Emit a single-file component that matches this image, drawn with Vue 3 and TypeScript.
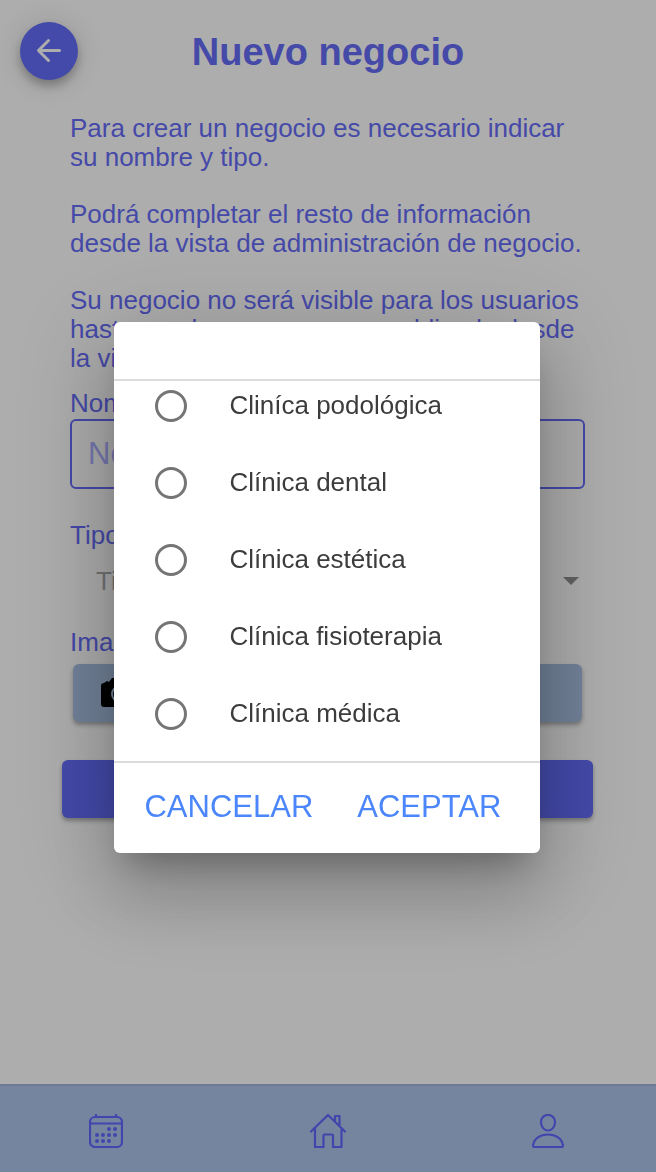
<script setup lang="ts">
import { ref } from 'vue'

const types: string[] = [
  'Cliníca podológica',
  'Clínica dental',
  'Clínica estética',
  'Clínica fisioterapia',
  'Clínica médica',
]
const selected = ref<string>('')
const name = ref<string>('')
const dots: number[][] = [
  [20, 15], [26, 15],
  [8, 21], [14, 21], [20, 21], [26, 21],
  [8, 27], [14, 27], [20, 27],
]
</script>

<template>
  <div class="screen">
    <header class="top">
      <button class="back" type="button" aria-label="Volver">
        <svg viewBox="0 0 26 26" width="26" height="26">
          <path d="M12.500 2.500L2.500 12.500l10 10M3 12.500H23.500" />
        </svg>
      </button>
      <h1>Nuevo negocio</h1>
    </header>

    <main class="content">
      <p>Para crear un negocio es necesario indicar su nombre y tipo.</p>
      <p>Podrá completar el resto de información desde la vista de administración de negocio.</p>
      <p>
        Su negocio no será visible para los usuarios
        hasta que lo marque como publicado desde
        la vista de administración.
      </p>
      <form class="form" @submit.prevent>
        <label for="name">Nombre</label>
        <input id="name" v-model="name" class="name" type="text" placeholder="Nombre" />
        <label for="kind">Tipo</label>
        <div class="pick">
          <select id="kind" v-model="selected">
            <option value="">Tipo</option>
            <option v-for="t in types" :key="t" :value="t">{{ t }}</option>
          </select>
          <svg viewBox="0 0 16 8" width="16" height="8"><path d="M0 0h16L8 8z" /></svg>
        </div>
        <span class="caption">Imagen</span>
        <button class="photo" type="button" aria-label="Imagen">
          <svg viewBox="0 0 36 30" width="36" height="30">
            <path d="M3 5l3-2 2 1 3-4h14l4 5h4a3 3 0 0 1 3 3v18a3 3 0 0 1-3 3H3a3 3 0 0 1-3-3V8a3 3 0 0 1 3-3z" />
            <circle cx="19" cy="16" r="8" />
          </svg>
        </button>
        <button class="submit" type="submit" aria-label="Crear"></button>
      </form>
    </main>

    <nav class="tabs">
      <a href="#agenda" aria-label="Agenda">
        <svg viewBox="0 0 34 34" width="34" height="34">
          <rect x="1" y="3" width="32" height="30" rx="5" />
          <path d="M1 9.500h32M7 1v2M27 1v2" />
          <circle v-for="d in dots" :key="d.join()" class="dot" :cx="d[0]" :cy="d[1]" r="2" />
        </svg>
      </a>
      <a href="#inicio" aria-label="Inicio">
        <svg viewBox="0 0 36 34" width="36" height="34">
          <path d="M1 17.500L18 1l17 16.500M5 14v19h8.500V21.500q0-1 1-1h7.500q1 0 1 1V33H31.500V14M25 7V2h4.500v10" />
        </svg>
      </a>
      <a href="#perfil" aria-label="Perfil">
        <svg viewBox="0 0 32 34" width="32" height="34">
          <path d="M16 1C11.500 1 8.800 4.300 9 8.500C9.200 12.800 12 16.500 16 16.500S22.800 12.800 23 8.500C23.200 4.300 20.500 1 16 1z" />
          <path d="M1 31.500C2 24.500 8 20.500 16 20.500S30 24.500 31 31.500Q31 33 29.500 33H2.500Q1 33 1 31.500z" />
        </svg>
      </a>
    </nav>

    <div class="backdrop">
      <div class="dialog" role="dialog" aria-label="Tipo" aria-modal="true">
        <div class="options">
          <label v-for="t in types" :key="t" class="option">
            <input v-model="selected" type="radio" name="type" :value="t" />
            <span>{{ t }}</span>
          </label>
        </div>
        <div class="actions">
          <button type="button">CANCELAR</button>
          <button type="button">ACEPTAR</button>
        </div>
      </div>
    </div>
  </div>
</template>

<style>
body {
  margin: 0;
  background: #adadad;
}
</style>

<style scoped>
.screen {
  --ink: #4549a8;
  display: flex;
  flex-direction: column;
  min-height: 100vh;
  font-family: 'Liberation Sans', Arial, sans-serif;
  font-size: 26px;
  line-height: 29px;
  color: var(--ink);
  background: #adadad;
}
* {
  box-sizing: border-box;
}
button,
input,
select {
  font: inherit;
}
.top {
  display: grid;
  grid-template-columns: 58px 1fr 58px;
  align-items: center;
  padding: 22px 20px 0;
}
.back {
  display: flex;
  align-items: center;
  justify-content: center;
  width: 58px;
  height: 58px;
  padding: 0;
  border: 0;
  border-radius: 50%;
  background: #444aaa;
  box-shadow: 0 6px 10px rgba(0, 0, 0, 0.25), 0 2px 30px rgba(0, 0, 0, 0.12);
}
.back path {
  fill: none;
  stroke: #adadad;
  stroke-width: 3;
  stroke-linecap: round;
  stroke-linejoin: round;
}
h1 {
  margin: 0;
  padding-top: 2px;
  font-size: 38px;
  line-height: 44px;
  text-align: center;
}
.content {
  flex: 1;
  padding: 34px 71px 0 70px;
}
p {
  margin: 0 0 28px;
}
.form {
  display: flex;
  flex-direction: column;
  margin-top: -12px;
}
.name {
  height: 70px;
  margin: 1px 0 32px;
  padding: 0 16px;
  border: 2px solid var(--ink);
  border-radius: 6px;
  background: transparent;
  font-size: 31px;
}
.name::placeholder {
  color: #7678b0;
  opacity: 1;
}
.pick {
  display: flex;
  align-items: center;
  height: 62px;
  margin-bottom: 16px;
  padding: 0 6px 0 26px;
}
.pick select {
  flex: 1;
  padding: 0;
  border: 0;
  appearance: none;
  background: transparent;
  color: #737373;
}
.pick path {
  fill: #626262;
}
.photo,
.submit {
  height: 58px;
  border: 0;
  border-radius: 6px;
  box-shadow: 0 3px 4px rgba(0, 0, 0, 0.3);
}
.photo {
  display: flex;
  align-items: center;
  margin: 7px 3px 38px;
  padding: 0 28px;
  background: #728299;
}
.photo circle {
  fill: none;
  stroke: #728299;
  stroke-width: 2;
}
.submit {
  margin: 0 -8px;
  background: #444aaa;
}
.tabs {
  display: flex;
  justify-content: space-between;
  height: 88px;
  padding: 0 92px 0 89px;
  border-top: 2px solid #6d7b92;
  background: #75859f;
}
.tabs a {
  display: flex;
  align-items: center;
  padding-top: 4px;
}
.tabs svg {
  fill: none;
  stroke: #4146ad;
  stroke-width: 2.2;
  stroke-linecap: round;
  stroke-linejoin: round;
}
.tabs .dot {
  fill: #4146ad;
  stroke: none;
}
.backdrop {
  position: fixed;
  inset: 0;
  display: flex;
  align-items: center;
  justify-content: center;
  padding: 3px 2px 0 0;
}
.dialog {
  width: 65%;
  padding-top: 57px;
  border-radius: 6px;
  background: #fff;
  box-shadow: 0 22px 30px -14px rgba(0, 0, 0, 0.25), 0 40px 76px 6px rgba(0, 0, 0, 0.16), 0 16px 92px 16px rgba(0, 0, 0, 0.12);
}
.options {
  height: 384px;
  overflow: hidden;
  border-top: 2px solid #dcdcdc;
  border-bottom: 2px solid #dcdcdc;
}
.option {
  display: flex;
  align-items: center;
  gap: 42px;
  height: 77px;
  padding-left: 41px;
  color: #3c3c3c;
}
.option:first-child {
  margin-top: -14px;
}
.option input {
  appearance: none;
  width: 32px;
  height: 32px;
  margin: 0;
  border: 3px solid #757575;
  border-radius: 50%;
}
.actions {
  display: flex;
  gap: 44px;
  height: 90px;
  padding: 0 30px 4px;
}
.actions button {
  padding: 0;
  border: 0;
  background: transparent;
  color: #4b86fa;
  font-size: 31px;
}
</style>
